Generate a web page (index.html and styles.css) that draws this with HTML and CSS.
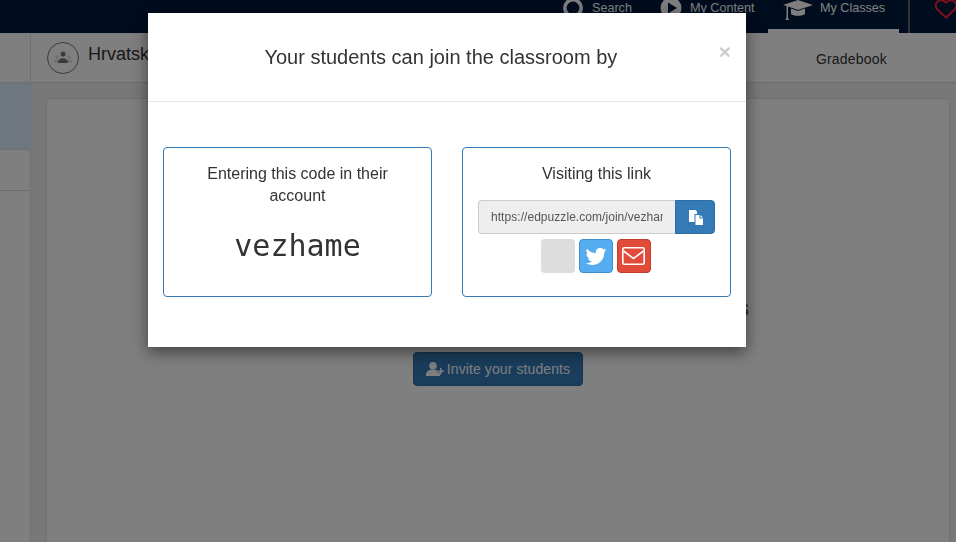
FILE: index.html
```html
<!DOCTYPE html>
<html lang="en">
<head>
    <meta charset="UTF-8">
    <title>My Classes</title>
    <link rel="stylesheet" href="styles.css">
</head>
<body>
    <nav class="topbar">
        <a class="nav-item nav-search">
            <svg class="nav-icon" width="22" height="22" viewBox="0 0 22 22"><circle cx="11" cy="11" r="8.200" fill="none" stroke="#fff" stroke-width="3.600"/></svg>
            Search
        </a>
        <a class="nav-item nav-content">
            <svg class="nav-icon" width="22" height="22" viewBox="0 0 22 22"><circle cx="11" cy="11" r="10.500" fill="#fff"/><path d="M8 5.500l9 5.500-9 5.500z" fill="#001a3e"/></svg>
            My Content
        </a>
        <a class="nav-item nav-classes">
            <svg class="cap-icon" width="30" height="20" viewBox="0 0 30 20"><path d="M15 0L30 5 15 10 5 6.600V17.500L6 20H2.500L3.500 17.500V6.100L0 5z" fill="#fff"/><path d="M8 8.600L15 11l7-2.400V14c-2 2.200-12 2.500-14 0z" fill="#fff"/></svg>
            My Classes
        </a>
        <div class="nav-heart">
            <svg class="heart-icon" width="24" height="20" viewBox="0 0 24 20"><path d="M12 18.500L3 10C-1.500 4.500 6-2 12 3.500c6-5.500 13.500 1 9 6.500z" fill="none" stroke="#ff2036" stroke-width="2"/></svg>
        </div>
    </nav>

    <div class="layout">
        <aside class="sidebar">
            <div class="side-head"></div>
            <div class="side-active"></div>
            <div class="side-row"></div>
        </aside>
        <main class="main">
            <header class="subheader">
                <span class="avatar">
                    <svg width="22" height="13" viewBox="0 0 22 13"><circle cx="5" cy="6" r="1.800" fill="#ddd"/><circle cx="17" cy="6" r="1.800" fill="#ddd"/><path d="M1.500 11.500c0-2 1.500-3 3.500-3s3.500 1 3.500 3z" fill="#ddd"/><path d="M13.500 11.500c0-2 1.500-3 3.500-3s3.500 1 3.500 3z" fill="#ddd"/><circle cx="11" cy="3" r="2.500" fill="#777"/><path d="M6 12c0-3 2-4.800 5-4.800s5 1.800 5 4.800z" fill="#777"/></svg>
                </span>
                <span class="class-name">Hrvatski jezik</span>
                <a class="gradebook">Gradebook</a>
            </header>
            <section class="content">
                <div class="card">
                    <h2 class="empty-title">Invite your students to join this classroom s</h2>
                    <button class="invite-btn">
                        <svg width="18" height="14" viewBox="0 0 18 14"><circle cx="7" cy="3.800" r="3.800" fill="#fff"/><path d="M0 14c0-4 1.500-6.500 7-6.500 2 0 3.500.5 4.500 1.500V10.500H14V14z" fill="#fff"/><path d="M14 6h1.500v2.500H18V10h-2.500v2.500H14V10h-2.500V8.500H14z" fill="#fff"/></svg>
                        Invite your students
                    </button>
                </div>
            </section>
        </main>
    </div>

    <div class="overlay"></div>

    <div class="modal">
        <div class="modal-header">
            <h3 class="modal-title">Your students can join the classroom by</h3>
            <span class="close">&times;</span>
        </div>
        <div class="modal-body">
            <div class="join-box">
                <p class="join-text">Entering this code in their account</p>
                <div class="join-code">vezhame</div>
            </div>
            <div class="join-box">
                <p class="join-text">Visiting this link</p>
                <div class="link-group">
                    <input class="link-input" type="text" value="https://edpuzzle.com/join/vezhame" readonly>
                    <button class="copy-btn">
                        <svg width="15" height="15" viewBox="0 0 15 15"><path d="M1 0h6.500L9 1.500V4H6.500v8H1z" fill="#fff"/><path d="M7.500 5h4v3.500H15V15H7.500z" fill="#fff"/><path d="M12.500 5L15 7.500h-2.500z" fill="#fff"/></svg>
                    </button>
                </div>
                <div class="share-row">
                    <a class="share share-blank"></a>
                    <a class="share share-twitter">
                        <svg width="24" height="24" viewBox="0 0 24 24"><path d="M22.460 6c-.77.35-1.600.58-2.460.69.88-.53 1.560-1.370 1.880-2.380-.83.5-1.750.85-2.720 1.050C18.370 4.500 17.260 4 16 4c-2.350 0-4.270 1.920-4.270 4.290 0 .34.04.67.11.98C8.280 9.090 5.110 7.380 3 4.790c-.37.63-.58 1.370-.58 2.150 0 1.490.75 2.810 1.910 3.560-.71 0-1.370-.2-1.950-.5v.03c0 2.080 1.480 3.820 3.440 4.210a4.220 4.220 0 0 1-1.930.07 4.280 4.280 0 0 0 4 2.980 8.521 8.521 0 0 1-5.330 1.840c-.34 0-.68-.02-1.020-.06C3.440 20.290 5.700 21 8.120 21 16 21 20.330 14.460 20.330 8.790c0-.19 0-.37-.01-.56.84-.6 1.560-1.360 2.140-2.230z" fill="#fff"/></svg>
                    </a>
                    <a class="share share-mail">
                        <svg width="23" height="18" viewBox="0 0 23 18"><rect x=".8" y=".8" width="21.400" height="16.400" rx="1.500" fill="none" stroke="#fff" stroke-width="1.600"/><path d="M1.500 4L11.500 11.500 21.500 4" fill="none" stroke="#fff" stroke-width="1.600"/></svg>
                    </a>
                </div>
            </div>
        </div>
    </div>
</body>
</html>
```

FILE: styles.css
```css
* {
    box-sizing: border-box;
}
html, body {
    height: 542px;
}
body {
    margin: 0;
    overflow: hidden;
    font-family: "Liberation Sans", Arial, sans-serif;
    color: #333;
    background-color: #f0f0f0;
}
.topbar {
    height: 33px;
    background-color: #001a3e;
    display: flex;
    overflow: hidden;
    padding-left: 562px;
}
.nav-item {
    display: flex;
    flex: none;
    align-items: center;
    height: 33px;
    padding-bottom: 17px;
    font-size: 12.600px;
    color: #fff;
    white-space: nowrap;
}
.nav-icon {
    margin-right: 8px;
    flex: none;
}
.nav-search {
    width: 98px;
}
.nav-content {
    width: 108px;
}
.nav-classes {
    width: 131px;
    padding-left: 15px;
    padding-bottom: 13px;
    border-bottom: 4px solid #fff;
}
.cap-icon {
    margin-right: 7px;
    flex: none;
    align-self: flex-start;
}
.nav-heart {
    flex: none;
    margin-left: 9px;
    padding-left: 24px;
    border-left: 2px solid #666;
    height: 33px;
}
.heart-icon {
    display: block;
    margin-top: -1px;
}
.layout {
    display: flex;
    height: 509px;
}
.sidebar {
    width: 31px;
    flex: none;
    border-right: 1px solid #d4e6f8;
    background-color: #fff;
}
.side-head {
    height: 50px;
    border-bottom: 1px solid #ddd;
}
.side-active {
    height: 67px;
    background-color: #dceeff;
    border-bottom: 1px solid #ddd;
}
.side-row {
    height: 41px;
    border-bottom: 1px solid #ddd;
}
.main {
    flex: 1;
    min-width: 0;
}
.subheader {
    height: 50px;
    background-color: #fff;
    border-bottom: 1px solid #ddd;
    display: flex;
    align-items: center;
    padding-left: 16px;
}
.avatar {
    width: 32px;
    height: 32px;
    border: 1.500px solid #777;
    border-radius: 50%;
    display: flex;
    align-items: center;
    justify-content: center;
}
.class-name {
    margin-left: 9px;
    margin-bottom: 7px;
    font-size: 18px;
}
.gradebook {
    margin-left: auto;
    margin-right: 69px;
    margin-top: 2px;
    font-size: 14px;
    letter-spacing: 0.2px;
}
.content {
    height: 459px;
    padding: 15px 6px 0 15px;
}
.card {
    height: 460px;
    background-color: #fff;
    border: 1px solid #e4e4e4;
    border-radius: 4px;
    display: flex;
    flex-direction: column;
    align-items: center;
    padding-top: 194px;
}
.empty-title {
    margin: 0 0 29px;
    font-size: 24px;
    line-height: 30px;
    font-weight: bold;
    color: #666;
    white-space: nowrap;
}
.invite-btn {
    width: 170px;
    height: 34px;
    border: 1px solid #2e6da4;
    border-radius: 4px;
    background-color: #337ab7;
    color: #fff;
    font-family: inherit;
    font-size: 14px;
    letter-spacing: 0.1px;
    display: flex;
    align-items: center;
    justify-content: center;
    gap: 3px;
    padding: 0;
}
.overlay {
    position: fixed;
    inset: 0;
    background-color: rgba(0, 0, 0, 0.5);
}
.modal {
    position: absolute;
    left: 148px;
    top: 13px;
    width: 598px;
    height: 334px;
    background-color: #fff;
    box-shadow: 0 5px 15px rgba(0, 0, 0, 0.5);
}
.modal-header {
    height: 89px;
    border-bottom: 1px solid #e5e5e5;
    display: flex;
    align-items: flex-start;
    padding: 30px 15px 0;
}
.modal-title {
    flex: 1;
    margin: 0;
    font-size: 20px;
    line-height: 28px;
    font-weight: normal;
    text-align: center;
}
.close {
    font-size: 21px;
    line-height: 21px;
    font-weight: bold;
    color: #ccc;
    margin-top: -2px;
}
.modal-body {
    display: flex;
    justify-content: space-between;
    padding: 45px 15px 0;
}
.join-box {
    width: 269px;
    height: 150px;
    border: 1px solid #337ab7;
    border-radius: 4px;
    padding: 15px 15px 0;
    text-align: center;
}
.join-text {
    margin: 0;
    font-size: 16px;
    line-height: 22px;
}
.join-code {
    margin-top: 18px;
    font-family: "DejaVu Sans Mono", monospace;
    font-size: 30px;
    line-height: 42px;
}
.link-group {
    display: flex;
    margin-top: 15px;
}
.link-input {
    width: 197px;
    height: 34px;
    border: 1px solid #ccc;
    border-right: none;
    border-radius: 4px 0 0 4px;
    background-color: #eee;
    color: #555;
    font-family: inherit;
    font-size: 12px;
    letter-spacing: 0.05px;
    padding: 0 12px;
    outline: none;
}
.copy-btn {
    width: 40px;
    height: 34px;
    border: 1px solid #2e6da4;
    border-radius: 0 4px 4px 0;
    background-color: #337ab7;
    display: flex;
    align-items: center;
    justify-content: center;
    padding: 0;
}
.share-row {
    display: flex;
    justify-content: center;
    gap: 4px;
    margin-top: 5px;
    padding-right: 2px;
}
.share {
    width: 34px;
    height: 34px;
    border-radius: 4px;
    display: flex;
    align-items: center;
    justify-content: center;
}
.share-blank {
    background-color: #ddd;
}
.share-twitter {
    background-color: #55acee;
    border: 1px solid #3f8fcf;
}
.share-mail {
    background-color: #e04b3a;
    border: 1px solid #c53d2d;
}
```
